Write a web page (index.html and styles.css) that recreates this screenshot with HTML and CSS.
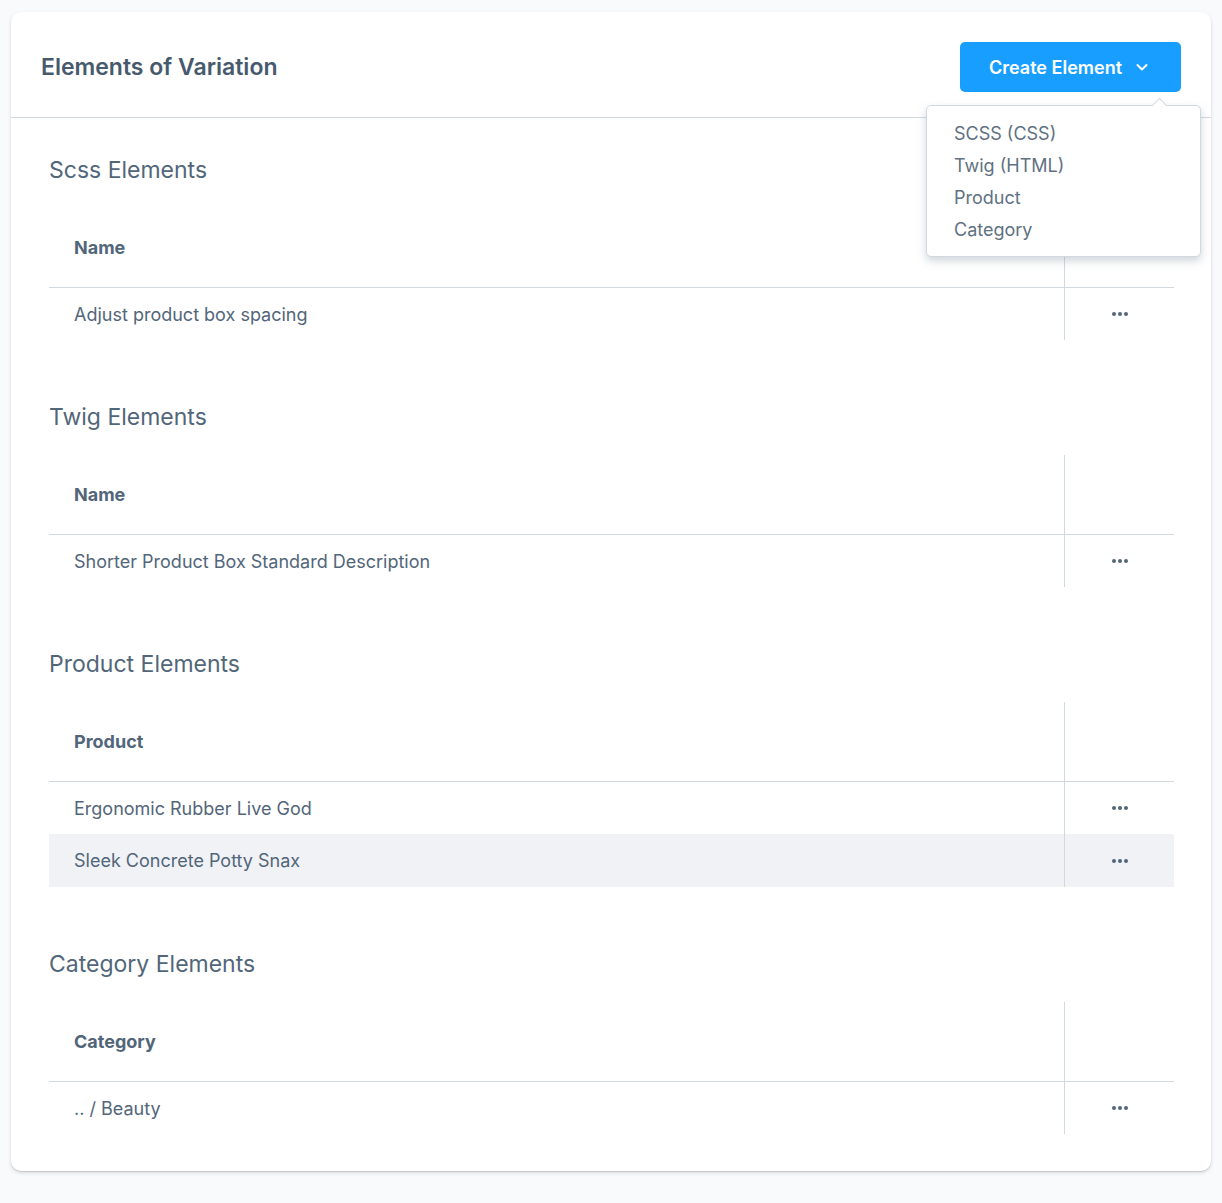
FILE: index.html
```html
<!DOCTYPE html>
<html lang="en">
<head>
    <meta charset="UTF-8">
    <meta name="viewport" content="width=device-width, initial-scale=1.0">
    <title>Elements of Variation</title>
    <link rel="stylesheet" href="styles.css">
</head>
<body>
    <main class="card">
        <header class="card-header">
            <h1>Elements of Variation</h1>
            <div class="dropdown">
                <button type="button" class="btn-create" aria-haspopup="true" aria-expanded="true">
                    Create Element
                    <svg width="12" height="8" viewBox="0 0 12 8" fill="none" stroke="currentColor" stroke-width="2" stroke-linecap="round" stroke-linejoin="round"><path d="M1.5 2 6 6.500 10.500 2"/></svg>
                </button>
                <div class="menu">
                    <button type="button">SCSS (CSS)</button>
                    <button type="button">Twig (HTML)</button>
                    <button type="button">Product</button>
                    <button type="button">Category</button>
                </div>
            </div>
        </header>

        <div class="card-body">
            <section>
                <h2>Scss Elements</h2>
                <table>
                    <thead>
                        <tr><th>Name</th><th class="actions"></th></tr>
                    </thead>
                    <tbody>
                        <tr>
                            <td>Adjust product box spacing</td>
                            <td class="actions"><button type="button" class="btn-more" aria-label="Actions"><svg width="16" height="4" viewBox="0 0 16 4"><circle cx="2" cy="2" r="2"/><circle cx="8" cy="2" r="2"/><circle cx="14" cy="2" r="2"/></svg></button></td>
                        </tr>
                    </tbody>
                </table>
            </section>

            <section>
                <h2>Twig Elements</h2>
                <table>
                    <thead>
                        <tr><th>Name</th><th class="actions"></th></tr>
                    </thead>
                    <tbody>
                        <tr>
                            <td>Shorter Product Box Standard Description</td>
                            <td class="actions"><button type="button" class="btn-more" aria-label="Actions"><svg width="16" height="4" viewBox="0 0 16 4"><circle cx="2" cy="2" r="2"/><circle cx="8" cy="2" r="2"/><circle cx="14" cy="2" r="2"/></svg></button></td>
                        </tr>
                    </tbody>
                </table>
            </section>

            <section>
                <h2>Product Elements</h2>
                <table>
                    <thead>
                        <tr><th>Product</th><th class="actions"></th></tr>
                    </thead>
                    <tbody>
                        <tr>
                            <td>Ergonomic Rubber Live God</td>
                            <td class="actions"><button type="button" class="btn-more" aria-label="Actions"><svg width="16" height="4" viewBox="0 0 16 4"><circle cx="2" cy="2" r="2"/><circle cx="8" cy="2" r="2"/><circle cx="14" cy="2" r="2"/></svg></button></td>
                        </tr>
                        <tr>
                            <td>Sleek Concrete Potty Snax</td>
                            <td class="actions"><button type="button" class="btn-more" aria-label="Actions"><svg width="16" height="4" viewBox="0 0 16 4"><circle cx="2" cy="2" r="2"/><circle cx="8" cy="2" r="2"/><circle cx="14" cy="2" r="2"/></svg></button></td>
                        </tr>
                    </tbody>
                </table>
            </section>

            <section>
                <h2>Category Elements</h2>
                <table>
                    <thead>
                        <tr><th>Category</th><th class="actions"></th></tr>
                    </thead>
                    <tbody>
                        <tr>
                            <td>.. / Beauty</td>
                            <td class="actions"><button type="button" class="btn-more" aria-label="Actions"><svg width="16" height="4" viewBox="0 0 16 4"><circle cx="2" cy="2" r="2"/><circle cx="8" cy="2" r="2"/><circle cx="14" cy="2" r="2"/></svg></button></td>
                        </tr>
                    </tbody>
                </table>
            </section>
        </div>
    </main>
</body>
</html>
```
FILE: styles.css
```css
* {
    margin: 0;
    padding: 0;
    box-sizing: border-box;
}

body {
    background-color: #f9fafc;
    color: #52667a;
    font-family: Inter, "Liberation Sans", sans-serif;
    font-size: 18px;
    padding: 12px 11px 32px;
}

button {
    font: inherit;
    color: inherit;
    border: none;
    background: none;
    cursor: pointer;
}

.card {
    background-color: #fff;
    border-radius: 10px;
    box-shadow: 0 1px 1px rgba(0, 0, 0, 0.12), 0 2px 4px rgba(0, 0, 0, 0.12);
}

.card-header {
    display: flex;
    justify-content: space-between;
    align-items: center;
    padding: 30px 30px 25px;
    border-bottom: 1px solid #d1d9e0;
}

h1 {
    color: #475a6d;
    font-size: 23px;
    font-weight: 600;
    line-height: 30px;
}

.dropdown {
    position: relative;
}

.btn-create {
    display: flex;
    align-items: center;
    gap: 14px;
    height: 50px;
    padding: 0 33px 0 29px;
    border-radius: 5px;
    background-color: #189eff;
    color: #fff;
    font-weight: 600;
}

/* menu opens over the card, with a small arrow under the button */
.menu {
    position: absolute;
    top: 63px;
    right: -20px;
    z-index: 1;
    width: 275px;
    padding: 12px 27px 10px;
    background-color: #fff;
    border: 1px solid #d1d9e0;
    border-radius: 5px;
    box-shadow: 0 4px 8px rgba(120, 138, 155, 0.35);
}

.menu::before {
    content: "";
    position: absolute;
    top: -6px;
    right: 35px;
    width: 10px;
    height: 10px;
    background-color: #fff;
    border-top: 1px solid #d1d9e0;
    border-left: 1px solid #d1d9e0;
    transform: rotate(45deg);
}

.menu button {
    display: block;
    width: 100%;
    line-height: 32px;
    text-align: left;
    color: #607182;
}

.card-body {
    display: flex;
    flex-direction: column;
    gap: 63px;
    padding: 38px 37px 37px 38px;
}

h2 {
    margin-bottom: 24px;
    font-size: 23px;
    font-weight: 400;
    line-height: 28px;
}

table {
    width: 100%;
    border-spacing: 0;
}

th, td {
    height: 52px;
    padding: 0 25px;
    text-align: left;
}

th {
    height: 80px;
    font-weight: 700;
    border-bottom: 1px solid #d1d9e0;
}

.actions {
    width: 110px;
    padding: 0;
    text-align: center;
    border-left: 1px solid #d1d9e0;
}

tbody tr:nth-child(even) {
    height: 53px;
    background-color: #f0f2f5;
}

.btn-more {
    width: 40px;
    height: 28px;
    vertical-align: middle;
}

.btn-more svg {
    display: block;
    margin: auto;
    fill: #52667a;
}
```
